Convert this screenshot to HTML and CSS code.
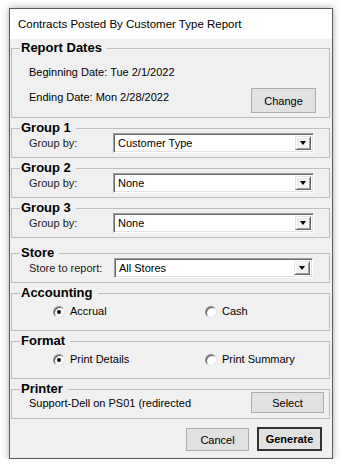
FILE: index.html
```html
<!DOCTYPE html>
<html lang="en">
<head>
    <meta charset="UTF-8">
    <meta name="viewport" content="width=device-width, initial-scale=1.0">
    <title>Contracts Posted By Customer Type Report</title>
    <link rel="stylesheet" href="styles.css">
</head>
<body>
    <div class="window">
        <div class="titlebar">Contracts Posted By Customer Type Report</div>

        <div class="content">
            <fieldset class="group dates">
                <legend>Report Dates</legend>
                <div class="date-line">Beginning Date: Tue 2/1/2022</div>
                <div class="date-row">
                    <span class="date-line">Ending Date: Mon 2/28/2022</span>
                    <button type="button" class="btn btn-change">Change</button>
                </div>
            </fieldset>

            <fieldset class="group">
                <legend>Group 1</legend>
                <div class="field-row">
                    <span class="field-label">Group by:</span>
                    <div class="combo"><span class="combo-text">Customer Type</span><span class="combo-btn"></span></div>
                </div>
            </fieldset>

            <fieldset class="group">
                <legend>Group 2</legend>
                <div class="field-row">
                    <span class="field-label">Group by:</span>
                    <div class="combo"><span class="combo-text">None</span><span class="combo-btn"></span></div>
                </div>
            </fieldset>

            <fieldset class="group group-last">
                <legend>Group 3</legend>
                <div class="field-row">
                    <span class="field-label">Group by:</span>
                    <div class="combo"><span class="combo-text">None</span><span class="combo-btn"></span></div>
                </div>
            </fieldset>

            <fieldset class="group">
                <legend>Store</legend>
                <div class="field-row">
                    <span class="field-label">Store to report:</span>
                    <div class="combo combo-store"><span class="combo-text">All Stores</span><span class="combo-btn"></span></div>
                </div>
            </fieldset>

            <fieldset class="group options">
                <legend>Accounting</legend>
                <div class="radio-row">
                    <span class="radio-option"><span class="radio checked"></span>Accrual</span>
                    <span class="radio-option"><span class="radio"></span>Cash</span>
                </div>
            </fieldset>

            <fieldset class="group options">
                <legend>Format</legend>
                <div class="radio-row">
                    <span class="radio-option"><span class="radio checked"></span>Print Details</span>
                    <span class="radio-option"><span class="radio"></span>Print Summary</span>
                </div>
            </fieldset>

            <fieldset class="group printer">
                <legend>Printer</legend>
                <div class="printer-row">
                    <span>Support-Dell on PS01 (redirected</span>
                    <button type="button" class="btn btn-select">Select</button>
                </div>
            </fieldset>

            <div class="footer">
                <button type="button" class="btn btn-cancel">Cancel</button>
                <button type="button" class="btn btn-default">Generate</button>
            </div>
        </div>
    </div>
</body>
</html>
```

FILE: styles.css
```css
:root {
    --face: #f0f0f0;
    --line: #bdbdbd;
    --btn: #e1e1e1;
    --btn-border: #adadad;
    --text: #000000;
}

* {
    margin: 0;
    padding: 0;
    box-sizing: border-box;
}

body {
    font-family: "Liberation Sans", Arial, sans-serif;
    font-size: 11px;
    color: var(--text);
    background: #ffffff;
}

.window {
    margin: 8px 0 0 9px;
    width: 324px;
    height: 451px;
    border: 1px solid #5c5c5c;
    background: var(--face);
    box-shadow: 0 0 7px rgba(0, 0, 0, 0.35);
}

.titlebar {
    height: 30px;
    line-height: 30px;
    padding-left: 8px;
    background: #ffffff;
    font-size: 11.5px;
}

.content {
    padding: 3px 2px 0 1px;
}

.group {
    min-width: 0;
    margin: 0 0 4px;
    padding: 0 0 4px;
    border: 1px solid var(--line);
}

.group legend {
    margin-left: 8px;
    padding: 0 5px 0 1px;
    font-size: 13px;
    font-weight: bold;
    line-height: 12px;
    height: 12px;
}

.group-last {
    margin-bottom: 9px;
}

/* report dates */
.dates {
    padding: 12px 13px 4px 0;
}

.date-line {
    line-height: 13px;
    padding-left: 17px;
}

.date-row {
    display: flex;
    align-items: flex-start;
    margin-top: 9px;
}

.date-row .date-line {
    margin-top: 3px;
}

/* buttons */
.btn {
    font-family: inherit;
    font-size: 11px;
    color: var(--text);
    background: var(--btn);
    border: 1px solid var(--btn-border);
    cursor: pointer;
}

.btn-change {
    margin-left: auto;
    width: 65px;
    height: 25px;
}

.btn-select {
    margin-left: auto;
    width: 73px;
    height: 21px;
}

.btn-cancel {
    width: 63px;
    height: 23px;
    margin-top: 1px;
}

.btn-default {
    width: 65px;
    height: 24px;
    font-weight: bold;
    border: 2px solid #333333;
}

/* group by rows */
.field-row {
    display: flex;
    align-items: center;
    margin-top: -1px;
    padding-left: 17px;
}

.field-label {
    width: 84px;
    color: #1a1a1a;
}

.combo {
    position: relative;
    width: 201px;
    height: 20px;
    background: #ffffff;
    border: 1px solid;
    border-color: #a0a0a0 #ffffff #ffffff #a0a0a0;
    box-shadow: inset 1px 1px 0 #696969, inset -1px -1px 0 #e3e3e3;
    display: flex;
    align-items: center;
}

.combo-store {
    width: 199px;
    margin-left: 1px;
}

.combo-text {
    padding-left: 4px;
    font-size: 11px;
}

.combo-btn {
    position: absolute;
    right: 2px;
    top: 2px;
    width: 16px;
    height: 14px;
    background: var(--face);
    border: 1px solid;
    border-color: #e3e3e3 #696969 #696969 #e3e3e3;
    box-shadow: inset 1px 1px 0 #ffffff, inset -1px -1px 0 #a0a0a0;
}

.combo-btn::after {
    content: "";
    position: absolute;
    left: 4px;
    top: 4px;
    border-left: 3.5px solid transparent;
    border-right: 3.5px solid transparent;
    border-top: 4px solid #000000;
}

/* radio rows */
.options {
    padding: 6px 0 12px;
}

.radio-row {
    display: flex;
    padding-left: 41px;
    line-height: 13px;
}

.radio-option {
    display: flex;
    align-items: center;
    width: 152px;
}

.radio-option:last-child {
    width: auto;
}

.radio {
    position: relative;
    width: 12px;
    height: 12px;
    margin-right: 5px;
    border-radius: 50%;
    background: #ffffff;
    border: 1px solid;
    border-color: #8a8a8a #e6e6e6 #e6e6e6 #8a8a8a;
    box-shadow: inset 1px 1px 0 #5a5a5a;
}

.radio.checked::after {
    content: "";
    position: absolute;
    left: 3px;
    top: 3px;
    width: 4px;
    height: 4px;
    border-radius: 50%;
    background: #000000;
}

/* printer */
.printer {
    margin-bottom: 0;
    padding: 0 5px 5px 0;
}

.printer-row {
    display: flex;
    align-items: center;
    margin-top: -3px;
    padding-left: 17px;
}

.footer {
    display: flex;
    justify-content: flex-end;
    align-items: flex-start;
    gap: 8px;
    padding: 8px 8px 0 0;
}
```
